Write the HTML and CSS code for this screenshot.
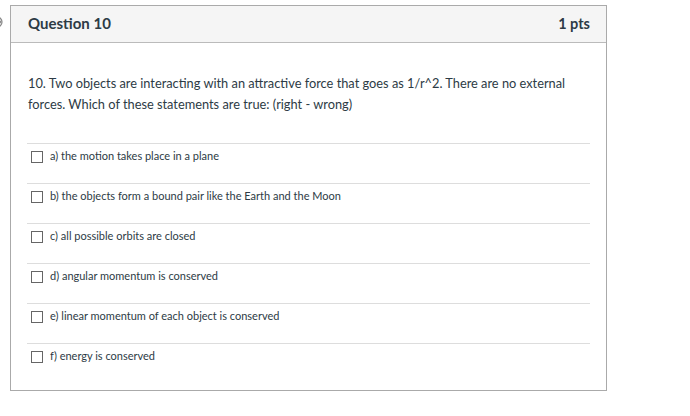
FILE: index.html
```html
<!DOCTYPE html>
<html>
<head>
<meta charset="utf-8">
<link rel="stylesheet" href="styles.css">
</head>
<body>
<div class="page">
  <svg class="edge-icon" width="6" height="14" viewBox="0 0 6 14"><path d="M-3 2 A5 5 0 0 1 -3 12" fill="none" stroke="#888" stroke-width="1.2"/><path d="M-2 4 L1 7 L-2 10" fill="none" stroke="#888" stroke-width="1.2"/></svg>
  <div class="question">
    <div class="q-header">
      <span class="q-title">Question 10</span>
      <span class="q-pts">1 pts</span>
    </div>
    <div class="q-body">
      <p class="q-text">10. Two objects are interacting with an attractive force that goes as 1/r^2. There are no external forces. Which of these statements are true: (right - wrong)</p>
      <ul class="answers">
        <li class="answer"><span class="box"></span><span>a) the motion takes place in a plane</span></li>
        <li class="answer"><span class="box"></span><span>b) the objects form a bound pair like the Earth and the Moon</span></li>
        <li class="answer"><span class="box"></span><span>c) all possible orbits are closed</span></li>
        <li class="answer"><span class="box"></span><span>d) angular momentum is conserved</span></li>
        <li class="answer"><span class="box"></span><span>e) linear momentum of each object is conserved</span></li>
        <li class="answer"><span class="box"></span><span>f) energy is conserved</span></li>
      </ul>
    </div>
  </div>
</div>
</body>
</html>
```
FILE: styles.css
```css
html, body {
  margin: 0;
  padding: 0;
  background: #fff;
}
body {
  font-family: Lato, "Liberation Sans", sans-serif;
  color: #2d3b45;
}
.page {
  position: relative;
  padding: 5px 0 0 10px;
}
.edge-icon {
  position: absolute;
  left: 0;
  top: 15px;
}
.question {
  width: 595px;
  border: 1px solid #aaa;
}
.q-header {
  height: 34px;
  background: #f5f5f5;
  border-bottom: 1px solid #bbb;
  display: flex;
  align-items: center;
  justify-content: space-between;
  padding: 0 16px 2px 17px;
}
.q-title {
  font-size: 15px;
  font-weight: bold;
}
.q-pts {
  font-size: 14.5px;
  font-weight: bold;
}
.q-body {
  padding: 30px 16px 7px 16px;
}
.q-text {
  margin: 0 0 28px 1px;
  font-size: 12.8px;
  line-height: 21px;
}
.answers {
  list-style: none;
  margin: 0;
  padding: 0;
}
.answer {
  border-top: 1px solid #ddd;
  display: flex;
  align-items: flex-start;
  padding-top: 6px;
  height: 33px;
  font-size: 11px;
  line-height: 12px;
}
.box {
  width: 10px;
  height: 10px;
  border: 1px solid #666;
  margin: 1px 7px 0 4px;
  flex: none;
}
```
